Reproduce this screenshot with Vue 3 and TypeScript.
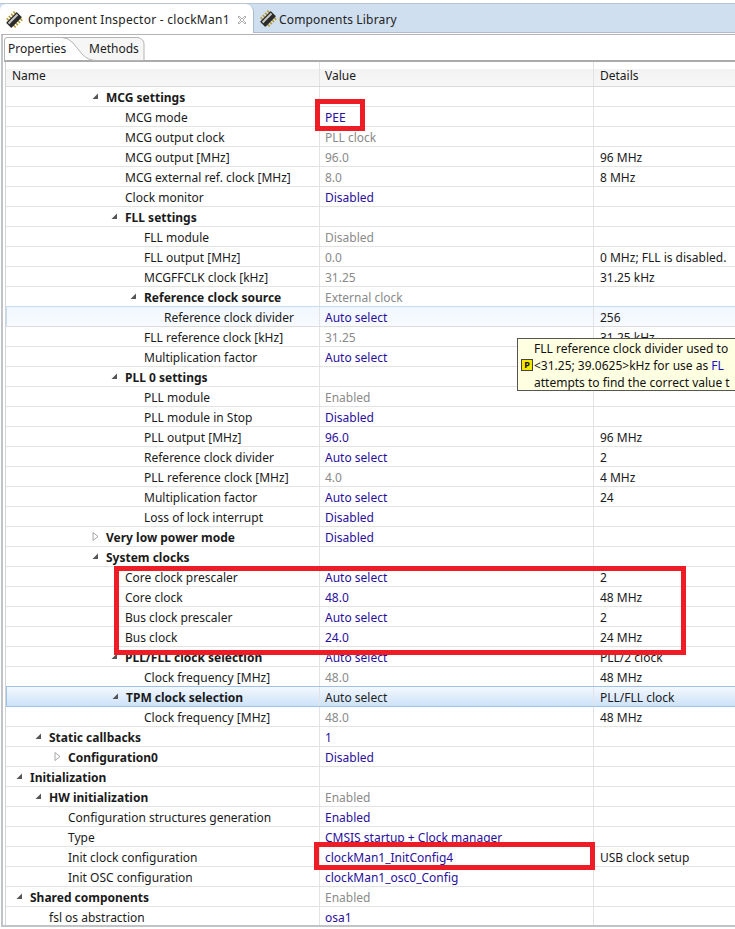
<script setup lang="ts">
interface Row {
  name: string
  level: number
  bold?: boolean
  arrow?: 'open' | 'closed'
  value?: string
  tone?: 'set' | 'ro' | 'plain'
  details?: string
  state?: 'hover' | 'selected'
}

const rows: Row[] = [
  { name: 'MCG settings', level: 4, bold: true, arrow: 'open' },
  { name: 'MCG mode', level: 5, value: 'PEE', tone: 'set' },
  { name: 'MCG output clock', level: 5, value: 'PLL clock', tone: 'ro' },
  { name: 'MCG output [MHz]', level: 5, value: '96.0', tone: 'ro', details: '96 MHz' },
  { name: 'MCG external ref. clock [MHz]', level: 5, value: '8.0', tone: 'ro', details: '8 MHz' },
  { name: 'Clock monitor', level: 5, value: 'Disabled', tone: 'set' },
  { name: 'FLL settings', level: 5, bold: true, arrow: 'open' },
  { name: 'FLL module', level: 6, value: 'Disabled', tone: 'ro' },
  { name: 'FLL output [MHz]', level: 6, value: '0.0', tone: 'ro', details: '0 MHz; FLL is disabled.' },
  { name: 'MCGFFCLK clock [kHz]', level: 6, value: '31.25', tone: 'ro', details: '31.25 kHz' },
  { name: 'Reference clock source', level: 6, bold: true, arrow: 'open', value: 'External clock', tone: 'ro' },
  { name: 'Reference clock divider', level: 7, value: 'Auto select', tone: 'set', details: '256', state: 'hover' },
  { name: 'FLL reference clock [kHz]', level: 6, value: '31.25', tone: 'ro', details: '31.25 kHz' },
  { name: 'Multiplication factor', level: 6, value: 'Auto select', tone: 'set' },
  { name: 'PLL 0 settings', level: 5, bold: true, arrow: 'open' },
  { name: 'PLL module', level: 6, value: 'Enabled', tone: 'ro' },
  { name: 'PLL module in Stop', level: 6, value: 'Disabled', tone: 'set' },
  { name: 'PLL output [MHz]', level: 6, value: '96.0', tone: 'set', details: '96 MHz' },
  { name: 'Reference clock divider', level: 6, value: 'Auto select', tone: 'set', details: '2' },
  { name: 'PLL reference clock [MHz]', level: 6, value: '4.0', tone: 'ro', details: '4 MHz' },
  { name: 'Multiplication factor', level: 6, value: 'Auto select', tone: 'set', details: '24' },
  { name: 'Loss of lock interrupt', level: 6, value: 'Disabled', tone: 'set' },
  { name: 'Very low power mode', level: 4, bold: true, arrow: 'closed', value: 'Disabled', tone: 'set' },
  { name: 'System clocks', level: 4, bold: true, arrow: 'open' },
  { name: 'Core clock prescaler', level: 5, value: 'Auto select', tone: 'set', details: '2' },
  { name: 'Core clock', level: 5, value: '48.0', tone: 'set', details: '48 MHz' },
  { name: 'Bus clock prescaler', level: 5, value: 'Auto select', tone: 'set', details: '2' },
  { name: 'Bus clock', level: 5, value: '24.0', tone: 'set', details: '24 MHz' },
  { name: 'PLL/FLL clock selection', level: 5, bold: true, arrow: 'open', value: 'Auto select', tone: 'set', details: 'PLL/2 clock' },
  { name: 'Clock frequency [MHz]', level: 6, value: '48.0', tone: 'ro', details: '48 MHz' },
  { name: 'TPM clock selection', level: 5, bold: true, arrow: 'open', value: 'Auto select', tone: 'plain', details: 'PLL/FLL clock', state: 'selected' },
  { name: 'Clock frequency [MHz]', level: 6, value: '48.0', tone: 'ro', details: '48 MHz' },
  { name: 'Static callbacks', level: 1, bold: true, arrow: 'open', value: '1', tone: 'set' },
  { name: 'Configuration0', level: 2, bold: true, arrow: 'closed', value: 'Disabled', tone: 'set' },
  { name: 'Initialization', level: 0, bold: true, arrow: 'open' },
  { name: 'HW initialization', level: 1, bold: true, arrow: 'open', value: 'Enabled', tone: 'ro' },
  { name: 'Configuration structures generation', level: 2, value: 'Enabled', tone: 'set' },
  { name: 'Type', level: 2, value: 'CMSIS startup + Clock manager', tone: 'set' },
  { name: 'Init clock configuration', level: 2, value: 'clockMan1_InitConfig4', tone: 'set', details: 'USB clock setup' },
  { name: 'Init OSC configuration', level: 2, value: 'clockMan1_osc0_Config', tone: 'set' },
  { name: 'Shared components', level: 0, bold: true, arrow: 'open', value: 'Enabled', tone: 'ro' },
  { name: 'fsl os abstraction', level: 1, value: 'osa1', tone: 'set' },
]

const indent = (level: number) => `${level * 19 + 10}px`
</script>

<template>
  <div class="view">
    <header class="tabbar">
      <div class="tab active">
        <svg class="chip" viewBox="0 0 16 16"><g transform="rotate(45 8 8)"><path d="M5 3.2H2.3M5 6H2.3M5 8.8H2.3M5 11.6H2.3M11 3.2h2.7M11 6h2.7M11 8.8h2.7M11 11.6h2.7" stroke="#b59a2e" stroke-width="1.4"/><rect x="4.7" y="1.3" width="6.6" height="13.4" rx=".6" fill="#2b2b2b"/><rect x="5.9" y="2.4" width="1.8" height="11.2" fill="#c9c9c9"/></g></svg>
        <span class="title">Component Inspector - clockMan1</span>
        <svg class="close" viewBox="0 0 10 10"><path d="M1 2l1-1 3 3 3-3 1 1-3 3 3 3-1 1-3-3-3 3-1-1 3-3z" fill="#fff" stroke="#9a9a9a" stroke-width=".8"/></svg>
      </div>
      <div class="tab">
        <svg class="chip" viewBox="0 0 16 16"><g transform="rotate(45 8 8)"><path d="M5 3.2H2.3M5 6H2.3M5 8.8H2.3M5 11.6H2.3M11 3.2h2.7M11 6h2.7M11 8.8h2.7M11 11.6h2.7" stroke="#b59a2e" stroke-width="1.4"/><rect x="4.7" y="1.3" width="6.6" height="13.4" rx=".6" fill="#2b2b2b"/><rect x="5.9" y="2.4" width="1.8" height="11.2" fill="#c9c9c9"/></g></svg>
        <span class="title2">Components Library</span>
      </div>
    </header>

    <main class="panel">
      <nav class="subtabs">
        <svg class="tabshape" viewBox="0 0 150 25" width="150" height="25">
          <path d="M58 0.5Q64 0.5 69 6L78 17Q84 23.5 92 23.5H140V7Q140 2 134 0.5z" fill="#f6f6f6" />
          <path d="M0.5 24V3Q0.5 0.5 3 0.5H134Q140 2 140 7V23.5" fill="none" stroke="#b4b4b4" />
          <path d="M58 0.5Q64 0.5 69 6L78 17Q84 23.5 92 23.5H140" fill="none" stroke="#b4b4b4" />
        </svg>
        <div class="subtab first">Properties</div>
        <div class="subtab second">Methods</div>
      </nav>
      <section class="table">
        <div class="head">
          <div class="c1">Name</div>
          <div class="c2">Value</div>
          <div class="c3">Details</div>
        </div>
        <div class="body">
          <div v-for="(r, i) in rows" :key="i" class="row" :class="r.state">
            <div class="c1" :class="{ bold: r.bold }" :style="{ paddingLeft: indent(r.level) }">
              <span class="twist">
                <svg v-if="r.arrow === 'open'" viewBox="0 0 9 9"><path d="M1.5 7L7 7 7 1.5z" fill="#555" /></svg>
                <svg v-else-if="r.arrow === 'closed'" viewBox="0 0 9 9"><path d="M2 0.5L7 4.5 2 8.5z" fill="#fff" stroke="#a6a6a6" /></svg>
              </span>
              <span>{{ r.name }}</span>
            </div>
            <div class="c2" :class="r.tone">{{ r.value }}</div>
            <div class="c3">{{ r.details }}</div>
          </div>
        </div>
      </section>
    </main>

    <div class="mark m1"></div>
    <div class="mark m2"></div>
    <div class="mark m3"></div>

    <aside class="tooltip">
      <span class="p">P</span>
      <div class="tiptext">
        <div>FLL reference clock divider used to</div>
        <div>&lt;31.25; 39.0625&gt;kHz for use as <span class="link">FL</span></div>
        <div>attempts to find the correct value t</div>
      </div>
    </aside>
  </div>
</template>

<style>
html, body { margin: 0; background: #fff; }
</style>

<style scoped>
.view {
  position: relative;
  width: 735px;
  height: 929px;
  overflow: hidden;
  background: #fff;
  font-family: "Noto Sans", "Open Sans", sans-serif;
  font-size: 12px;
  color: #1a1a1a;
}
.tabbar {
  display: flex;
  height: 30px;
  margin-top: 3px;
  background: #cfdfef;
  border-top: 1px solid #b9c4d6;
  border-bottom: 1px solid #b4bacb;
  box-sizing: border-box;
}
.tab {
  display: flex;
  align-items: center;
  gap: 5px;
  padding: 2px 6px 0 5px;
  height: 29px;
  box-sizing: border-box;
  color: #222;
  white-space: nowrap;
}
.tab.active {
  width: 254px;
  flex: none;
  padding-right: 0;
  background: #fff;
  border-radius: 6px 8px 0 0;
  border-right: 1px solid #a9bccf;
}
.tab:not(.active) { height: 28px; }
.title { letter-spacing: .26px; flex: none; }
.title2 { letter-spacing: .17px; margin-left: -3px; }
.chip { width: 18px; height: 18px; flex: none; }
.close { width: 10px; height: 10px; margin-left: 2px; flex: none; }
.panel {
  margin: 1px 0 0 1px;
  border-top: 1px solid #b2b2b2;
  border-left: 2px solid #c0c4c8;
  border-bottom: 2px solid #c0c4c8;
  padding: 2px 0 0 1px;
  height: 893px;
  box-sizing: border-box;
  position: relative;
  overflow: hidden;
}
.subtabs {
  position: relative;
  display: flex;
  height: 23px;
  border-bottom: 2px solid #ababab;
}
.tabshape { position: absolute; left: 0; top: 0; }
.subtab {
  position: relative;
  padding-top: 3px;
  color: #222;
  line-height: 18px;
  box-sizing: border-box;
}
.first { padding-left: 4px; width: 85px; }
.table {
  border-left: 1px solid #d4d4d4;
  margin-left: 1px;
}
.head {
  display: flex;
  height: 25px;
  box-sizing: border-box;
  border-bottom: 1px solid #d9d9d9;
  background: linear-gradient(#fff 0, #fff 7px, #f2f2f2 7px, #f7f7f7 100%);
}
.head > div { height: 100%; display: flex; align-items: center; padding-top: 3px; box-sizing: border-box; }
.row {
  display: flex;
  height: 20px;
  box-sizing: border-box;
  border-bottom: 1px solid #e3e3e3;
  line-height: 21px;
  white-space: nowrap;
}
.row.hover, .row.selected {
  margin-top: -1px;
  height: 21px;
  border-top: 1px solid #c5dcf5;
  border-left: 1px solid #c5dcf5;
}
.row.hover {
  background: linear-gradient(#f0f7ff, #f8fbff);
  border-bottom-color: #dcdcdc;
}
.row.selected {
  background: linear-gradient(#f3f8fe, #cde2f9);
  border-top-color: #9fc1e6;
  border-left-color: #9fc1e6;
  border-bottom-color: #9fc1e6;
}
.row.hover .c1, .row.selected .c1 { width: 313px; }
.c1 {
  width: 314px;
  flex: none;
  display: flex;
  box-sizing: border-box;
  padding-left: 6px;
  border-right: 1px solid #e3e3e3;
}
.c2 {
  width: 274px;
  flex: none;
  padding-left: 5px;
  box-sizing: border-box;
  border-right: 1px solid #e3e3e3;
}
.c3 { padding-left: 6px; flex: 1; overflow: hidden; }
.twist { width: 10px; margin-right: 5px; margin-left: -1px; flex: none; display: flex; align-items: center; }
.twist svg { width: 9px; height: 9px; }
.bold { font-weight: 700; }
.set { color: #2a0f9c; }
.ro { color: #8a8a8a; }
.plain { color: #222; }
.mark {
  position: absolute;
  border: 5px solid #ee1c25;
  box-sizing: border-box;
  pointer-events: none;
}
.m1 { left: 315px; top: 99px; width: 50px; height: 32px; }
.m2 { left: 114px; top: 566px; width: 572px; height: 89px; }
.m3 { left: 314px; top: 842px; width: 281px; height: 28px; }
.tooltip {
  position: absolute;
  left: 517px;
  top: 338px;
  width: 230px;
  height: 53px;
  box-sizing: border-box;
  border: 1px solid #555;
  background: #ffffe1;
  display: flex;
  align-items: center;
  padding-left: 3px;
  color: #111;
  white-space: nowrap;
}
.p {
  width: 10px;
  height: 10px;
  background: #f5e600;
  border: 1px solid #444;
  font-size: 9px;
  line-height: 10px;
  text-align: center;
  font-weight: 700;
  margin-right: 1px;
  flex: none;
}
.tiptext { line-height: 17px; padding-top: 2px; }
.link { color: #1414c8; }
</style>
